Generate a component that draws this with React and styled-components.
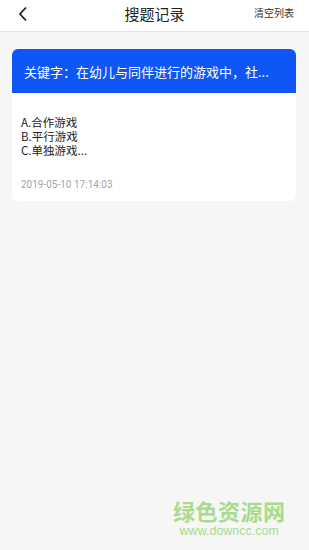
import React from "react";
import styled, { createGlobalStyle } from "styled-components";

const GlobalStyle = createGlobalStyle`
  html, body {
    margin: 0;
    padding: 0;
    background: #f6f6f6;
    font-family: "Noto Sans CJK SC", "Roboto", sans-serif;
  }
`;

const Page = styled.div`
  position: relative;
  width: 309px;
  height: 550px;
  background: #f6f6f6;
  overflow: hidden;
`;

const TopBar = styled.div`
  height: 31px;
  background: #fff;
  border-bottom: 1px solid #e4e4e4;
  display: grid;
  grid-template-columns: 60px 1fr 60px;
  align-items: center;
`;

const BackButton = styled.div`
  padding-left: 18px;
  display: flex;
  align-items: center;
  margin-top: -4px;
`;

const Title = styled.div`
  text-align: center;
  font-size: 15px;
  color: #222;
  line-height: 20px;
  margin-top: -4px;
`;

const ClearLink = styled.div`
  font-size: 10px;
  color: #333;
  text-align: right;
  padding-right: 15px;
  margin-top: -6px;
`;

const List = styled.div`
  padding: 17px 13px 0 12px;
`;

const Card = styled.div`
  background: #fff;
  border-radius: 6px;
  overflow: hidden;
`;

const CardHead = styled.div`
  background: #1056f6;
  color: #fff;
  height: 44px;
  display: flex;
  align-items: center;
  padding-left: 12px;
  font-size: 13px;
  white-space: nowrap;
`;

const CardBody = styled.div`
  padding: 22px 9px 11px;
`;

const Options = styled.div`
  font-size: 11.5px;
  line-height: 14px;
  color: #222;
`;

const Time = styled.div`
  margin-top: 22px;
  font-family: "Roboto", sans-serif;
  font-size: 10px;
  color: #a5a5a5;
`;

const Watermark = styled.div`
  position: absolute;
  left: 173px;
  top: 496px;
  display: flex;
  flex-direction: column;
  align-items: center;
`;

const MarkName = styled.div`
  font-size: 22px;
  font-weight: 700;
  color: #a9db8c;
  letter-spacing: 0.5px;
  line-height: 28px;
`;

const MarkUrl = styled.div`
  font-family: "Liberation Sans", sans-serif;
  font-size: 12.5px;
  color: #a9db8c;
  line-height: 14px;
`;

export default function App() {
  return (
    <Page>
      <GlobalStyle />
      <TopBar>
        <BackButton>
          <svg width="10" height="16" viewBox="0 0 10 16">
            <path d="M8 1.5 L2 8 L8 14.5" fill="none" stroke="#222" strokeWidth="1.8" />
          </svg>
        </BackButton>
        <Title>搜题记录</Title>
        <ClearLink>清空列表</ClearLink>
      </TopBar>
      <List>
        <Card>
          <CardHead>关键字：在幼儿与同伴进行的游戏中，社...</CardHead>
          <CardBody>
            <Options>
              <div>A.合作游戏</div>
              <div>B.平行游戏</div>
              <div>C.单独游戏...</div>
            </Options>
            <Time>2019-05-10 17:14:03</Time>
          </CardBody>
        </Card>
      </List>
      <Watermark>
        <MarkName>绿色资源网</MarkName>
        <MarkUrl>www.downcc.com</MarkUrl>
      </Watermark>
    </Page>
  );
}
